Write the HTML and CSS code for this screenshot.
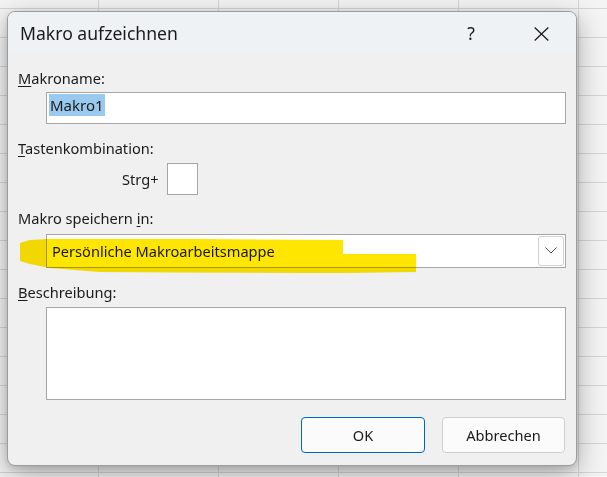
FILE: index.html
```html
<!DOCTYPE html>
<html lang="de">
<head>
  <meta charset="UTF-8" />
  <title>Makro aufzeichnen</title>
  <link rel="stylesheet" href="styles.css">
</head>
<body>
  <div class="dialog">
    <div class="titlebar">
      <span class="title">Makro aufzeichnen</span>
      <span class="help">?</span>
      <span class="close">
        <svg width="15" height="14" viewBox="0 0 15 14">
          <path d="M0.7 0.5 L14.3 13.5 M14.3 0.5 L0.7 13.5" stroke="#1b1b1b" stroke-width="1.25" fill="none"/>
        </svg>
      </span>
    </div>

    <div class="content">
      <div class="label"><u>M</u>akroname:</div>
      <div class="field name-field"><span class="selected">Makro1</span></div>

      <div class="label gap-lg"><u>T</u>astenkombination:</div>
      <div class="shortcut">
        <span class="shortcut-text">Strg+</span>
        <div class="key-box"></div>
      </div>

      <div class="label gap-md">Makro speichern <u>i</u>n:</div>
      <div class="combo-wrap">
        <div class="field combo">
          <span class="combo-text">Persönliche Makroarbeitsmappe</span>
          <div class="combo-btn">
            <svg width="12" height="7" viewBox="0 0 12 7">
              <polyline points="0.5,0.5 6,6 11.5,0.5" stroke="#555" stroke-width="1" fill="none"/>
            </svg>
          </div>
        </div>
        <!-- highlighter stroke drawn over the field -->
        <svg class="marker" width="400" height="42" viewBox="0 0 400 42">
          <polygon points="2,9 12,6 30,5 180,5 325,6 325,20 398,20 398,38 325,39 282,39 160,38.5 82,38 32,34 12,30 2,27" fill="#ffe600"/>
        </svg>
      </div>

      <div class="label gap-lg"><u>B</u>eschreibung:</div>
      <div class="field desc"></div>

      <div class="buttons">
        <button class="btn primary">OK</button>
        <button class="btn">Abbrechen</button>
      </div>
    </div>
  </div>
</body>
</html>
```

FILE: styles.css
```css
html, body {
  margin: 0;
  width: 607px;
  height: 477px;
  overflow: hidden;
}
body {
  font-family: "Noto Sans", "Open Sans", sans-serif;
  color: #1a1a1a;
  background-color: #f4f4f4;
  background-image:
    linear-gradient(to right, #d6d6d6 1px, transparent 1px),
    linear-gradient(to bottom, #d6d6d6 1px, transparent 1px);
  background-size: 120px 29px;
  background-position: 98px 8px;
  padding: 11px 0 0 7px;
  box-sizing: border-box;
}
.dialog {
  width: 570px;
  box-sizing: border-box;
  background: #f0f0f0;
  border: 1px solid #9c9c9c;
  border-radius: 8px;
  box-shadow: 0 8px 28px rgba(0, 0, 0, 0.32), 0 2px 6px rgba(0, 0, 0, 0.12);
}
.titlebar {
  height: 42px;
  display: flex;
  align-items: center;
  padding: 0 12px 0 12px;
  background: #eef2f5;
  border-radius: 7px 7px 0 0;
}
.title {
  flex: 1;
  font-size: 17.6px;
  line-height: 22px;
  margin-top: -1px;
}
.help {
  width: 30px;
  text-align: center;
  font-size: 17.6px;
  line-height: 22px;
  margin-top: -1px;
  margin-right: 33px;
}
.close {
  width: 45px;
  display: flex;
  justify-content: center;
  margin-top: 1px;
}
.content {
  padding: 14px 10px 12px 10px;
}
.label {
  font-size: 14.6px;
  line-height: 20px;
}
.label u {
  text-underline-offset: 2px;
}
.gap-lg {
  margin-top: 14px;
}
.gap-md {
  margin-top: 13px;
}
.field {
  margin-left: 28px;
  background: #fff;
  border: 1px solid #a6a6a6;
  box-sizing: border-box;
}
.name-field {
  margin-top: 4px;
  height: 32px;
  padding: 1px 0 0 2px;
  font-size: 15px;
}
.selected {
  display: inline-block;
  background: #99c9ef;
  line-height: 22px;
  padding: 0 1px;
}
.shortcut {
  margin-top: 5px;
  height: 32px;
  display: flex;
  align-items: center;
  padding-left: 104px;
  font-size: 14.6px;
}
.shortcut-text {
  width: 45px;
}
.key-box {
  width: 31px;
  height: 32px;
  box-sizing: border-box;
  background: #fff;
  border: 1px solid #a6a6a6;
}
.combo-wrap {
  position: relative;
  margin-top: 6px;
}
.combo {
  height: 34px;
  display: flex;
  align-items: center;
  padding-left: 5px;
  font-size: 14.6px;
}
.combo-text {
  flex: 1;
}
.combo-btn {
  width: 26px;
  height: 30px;
  margin-right: 1px;
  box-sizing: border-box;
  border: 1px solid #d2d2d2;
  border-radius: 3px;
  background: #fdfdfd;
  display: flex;
  align-items: center;
  justify-content: center;
}
.combo-btn svg {
  margin-top: -1px;
}
.marker {
  position: absolute;
  left: 0;
  top: 0;
  mix-blend-mode: multiply;
  pointer-events: none;
}
.desc {
  margin-top: 5px;
  height: 93px;
}
.buttons {
  margin-top: 17px;
  display: flex;
  justify-content: flex-end;
  gap: 17px;
  padding-right: 1px;
}
.btn {
  width: 123px;
  height: 36px;
  font-family: inherit;
  font-size: 14.6px;
  color: #1a1a1a;
  background: #fbfbfb;
  border: 1px solid #d0d0d0;
  border-radius: 4px;
}
.btn.primary {
  width: 124px;
  border-color: #0067c0;
}
```
